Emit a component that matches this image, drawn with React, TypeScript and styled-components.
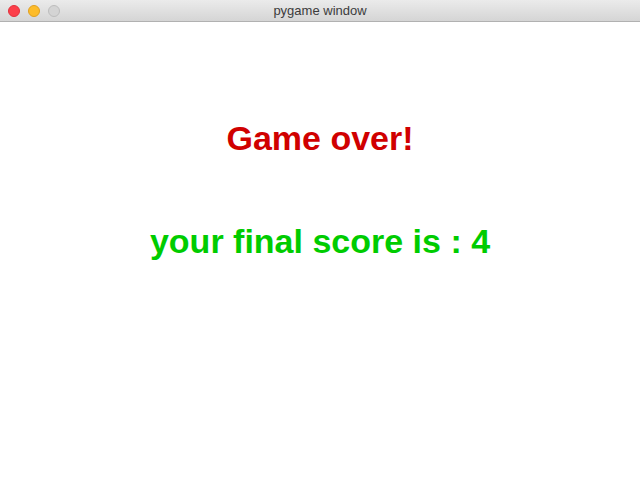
import React from "react";
import styled, { createGlobalStyle } from "styled-components";

const Global = createGlobalStyle`
  html, body { margin: 0; padding: 0; background: #ffffff; }
  #root { width: 640px; height: 502px; }
`;

const Window = styled.div`
  width: 640px;
  height: 502px;
  display: flex;
  flex-direction: column;
  background: #ffffff;
  overflow: hidden;
`;

const TitleBar = styled.div`
  position: relative;
  height: 22px;
  flex: 0 0 22px;
  box-sizing: border-box;
  background: linear-gradient(#ebebeb, #d5d5d5);
  border-bottom: 1px solid #b1b1b1;
  display: flex;
  align-items: center;
  justify-content: center;
`;

const Lights = styled.div`
  position: absolute;
  left: 8px;
  top: 5px;
  display: flex;
  gap: 8px;
`;

const Light = styled.span<{ $fill: string; $border: string }>`
  width: 12px;
  height: 12px;
  box-sizing: border-box;
  border-radius: 50%;
  background: ${(p) => p.$fill};
  border: 1px solid ${(p) => p.$border};
`;

const Title = styled.div`
  font-family: "Liberation Sans", Arial, sans-serif;
  font-size: 13px;
  color: #3c3c3c;
  line-height: 22px;
`;

const Content = styled.main`
  flex: 1;
  display: flex;
  flex-direction: column;
  align-items: center;
  padding-top: 97px;
  gap: 64px;
`;

const Message = styled.div<{ $color: string }>`
  font-family: "Liberation Sans", Arial, Helvetica, sans-serif;
  font-weight: bold;
  font-size: 34px;
  line-height: 39px;
  color: ${(p) => p.$color};
  font-variant-ligatures: none;
  white-space: pre;
`;

export default function App() {
  return (
    <>
      <Global />
      <Window>
        <TitleBar>
          <Lights>
            <Light $fill="#fc3f4a" $border="#e2313c" />
            <Light $fill="#fdbc2a" $border="#e0a020" />
            <Light $fill="#d4d4d4" $border="#bdbdbd" />
          </Lights>
          <Title>pygame window</Title>
        </TitleBar>
        <Content>
          <Message $color="#d00000">Game over!</Message>
          <Message $color="#00cc00">your final score is : 4</Message>
        </Content>
      </Window>
    </>
  );
}
